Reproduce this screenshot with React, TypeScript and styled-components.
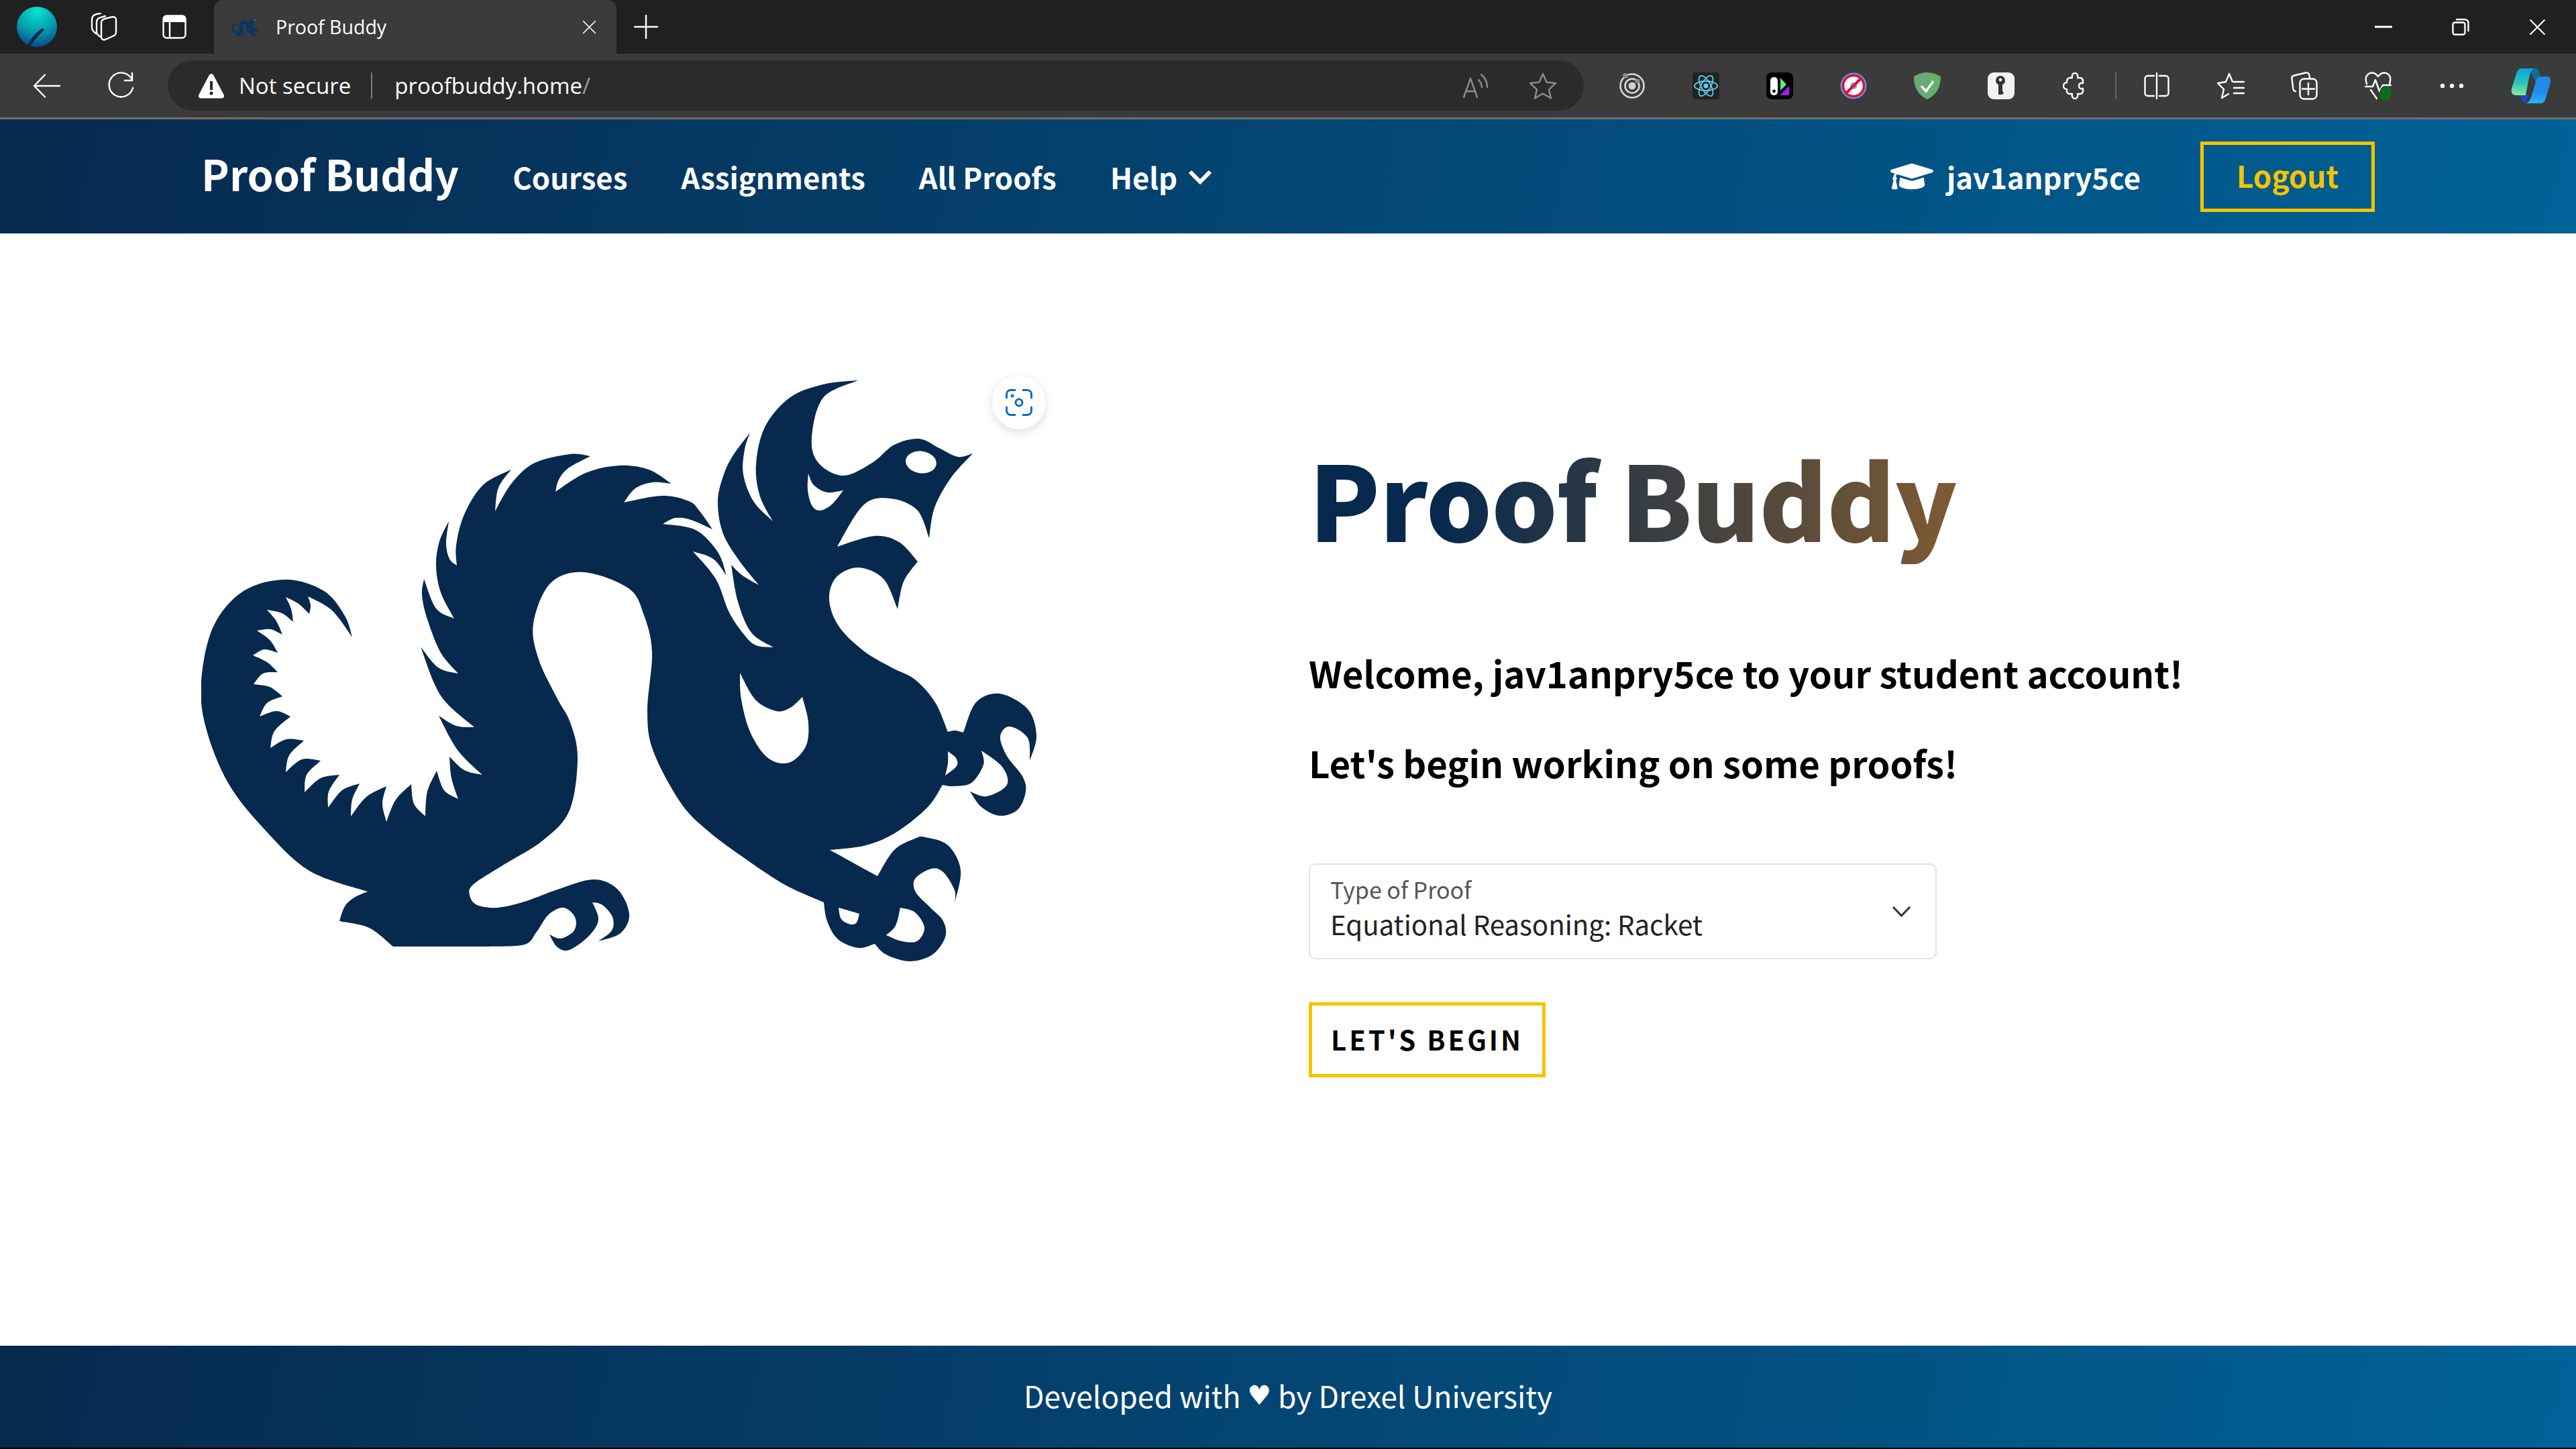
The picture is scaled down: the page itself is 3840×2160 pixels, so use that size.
import React from "react";
import styled, { createGlobalStyle } from "styled-components";
import { FaGraduationCap } from "react-icons/fa";

type Pt = [number, number];

// dragon outline in screen pixels; each run is smooth, runs meet at sharp corners
const OUTLINE: Pt[][] = [
  [[1279, 567], [1227, 593], [1210, 653], [1220, 690], [1257, 709], [1300, 690], [1333, 663], [1370, 654], [1400, 668], [1428, 681], [1450, 676]],
  [[1450, 676], [1417, 713], [1393, 757], [1385, 802]],
  [[1385, 802], [1367, 760], [1327, 743], [1287, 753], [1248, 815]],
  [[1248, 815], [1303, 799], [1340, 808], [1368, 837]],
  [[1368, 837], [1347, 867], [1338, 908]],
  [[1338, 908], [1317, 863], [1280, 846], [1247, 860], [1236, 893], [1250, 933], [1287, 970], [1329, 995], [1364, 1013], [1394, 1047], [1413, 1091]],
  [[1413, 1091], [1424, 1089], [1436, 1092]],
  [[1436, 1092], [1455, 1047], [1490, 1034], [1532, 1057], [1545, 1097], [1535, 1134]],
  [[1535, 1134], [1532, 1100], [1505, 1083], [1491, 1098], [1501, 1127], [1524, 1157], [1529, 1180], [1517, 1207], [1490, 1216], [1463, 1203], [1446, 1180]],
  [[1446, 1180], [1471, 1187], [1501, 1170], [1494, 1143], [1463, 1119]],
  [[1463, 1119], [1466, 1140], [1448, 1167], [1421, 1172], [1405, 1170]],
  [[1405, 1170], [1383, 1203], [1337, 1240], [1291, 1260], [1237, 1267]],
  [[1237, 1267], [1308, 1306]],
  [[1308, 1306], [1333, 1267], [1364, 1250], [1379, 1248], [1413, 1260], [1432, 1297], [1423, 1347]],
  [[1423, 1347], [1423, 1327], [1406, 1300], [1388, 1295], [1364, 1310], [1365, 1330], [1387, 1353], [1406, 1373], [1409, 1397], [1390, 1423], [1356, 1433], [1321, 1423], [1304, 1407]],
  [[1304, 1407], [1279, 1413], [1249, 1400], [1233, 1373], [1228, 1345]],
  [[1228, 1345], [1172, 1320], [1115, 1283], [1057, 1240], [1015, 1197], [974, 1120], [965, 1060], [972, 973], [960, 917], [937, 877], [870, 853], [820, 870], [795, 930], [803, 983], [830, 1040], [850, 1077], [861, 1130], [849, 1208], [809, 1253], [751, 1289], [706, 1318], [700, 1334], [711, 1349], [742, 1353], [782, 1344], [831, 1326], [885, 1311], [921, 1326], [938, 1363], [925, 1391], [892, 1403]],
  [[892, 1403], [912, 1387], [913, 1367], [898, 1349], [883, 1345]],
  [[883, 1345], [892, 1371], [878, 1395], [849, 1416], [831, 1412], [819, 1393]],
  [[819, 1393], [836, 1399], [856, 1387], [857, 1367], [840, 1353], [818, 1363], [800, 1389], [782, 1408], [729, 1411]],
  [[729, 1411], [586, 1411]],
  [[586, 1411], [550, 1383], [506, 1373]],
  [[506, 1373], [514, 1351], [528, 1338], [548, 1329]],
  [[548, 1329], [461, 1298], [394, 1236], [340, 1167], [307, 1085], [300, 1016], [318, 934], [363, 881], [427, 864], [483, 881], [514, 918], [525, 950]],
  [[525, 950], [495, 910], [459, 889]],
  [[459, 889], [463, 902], [461, 915]],
  [[461, 915], [445, 900], [426, 890]],
  [[426, 890], [434, 908], [437, 927]],
  [[437, 927], [420, 914], [398, 909]],
  [[398, 909], [412, 926], [421, 946]],
  [[421, 946], [403, 938], [383, 940]],
  [[383, 940], [402, 954], [414, 973]],
  [[414, 973], [394, 968], [377, 977]],
  [[377, 977], [398, 987], [414, 1002]],
  [[414, 1002], [392, 1004], [378, 1020]],
  [[378, 1020], [402, 1024], [421, 1038]],
  [[421, 1038], [398, 1048], [387, 1068]],
  [[387, 1068], [412, 1060], [433, 1068]],
  [[433, 1068], [409, 1090], [403, 1115]],
  [[403, 1115], [427, 1102], [453, 1104]],
  [[453, 1104], [431, 1126], [426, 1151]],
  [[426, 1151], [450, 1132], [478, 1134]],
  [[478, 1134], [457, 1155], [454, 1181]],
  [[454, 1181], [478, 1160], [506, 1155]],
  [[506, 1155], [490, 1180], [489, 1204]],
  [[489, 1204], [510, 1178], [536, 1168]],
  [[536, 1168], [525, 1192], [523, 1217]],
  [[523, 1217], [546, 1188], [576, 1172]],
  [[576, 1172], [570, 1198], [576, 1225]],
  [[576, 1225], [590, 1192], [613, 1169]],
  [[613, 1169], [617, 1198], [634, 1217]],
  [[634, 1217], [637, 1180], [651, 1149]],
  [[651, 1149], [662, 1178], [683, 1191]],
  [[683, 1191], [673, 1160], [670, 1128]],
  [[670, 1128], [692, 1148], [719, 1155]],
  [[719, 1155], [682, 1118], [654, 1067]],
  [[654, 1067], [680, 1082], [707, 1084]],
  [[707, 1084], [657, 1037], [627, 964]],
  [[627, 964], [653, 995], [683, 1004]],
  [[683, 1004], [657, 973], [637, 923], [629, 887], [632, 863]],
  [[632, 863], [650, 907], [677, 922]],
  [[677, 922], [657, 883], [650, 843], [655, 807], [669, 777]],
  [[669, 777], [665, 810], [670, 833], [681, 843]],
  [[681, 843], [680, 813], [692, 767], [720, 723], [762, 700]],
  [[762, 700], [743, 727], [738, 762]],
  [[738, 762], [763, 720], [797, 690], [850, 677], [880, 680]],
  [[880, 680], [847, 698], [833, 715], [828, 733]],
  [[828, 733], [873, 705], [923, 694], [967, 700], [1001, 721]],
  [[1001, 721], [973, 719], [947, 728], [930, 749]],
  [[930, 749], [987, 739], [1027, 747], [1043, 762], [1062, 789]],
  [[1062, 789], [1030, 775], [1007, 772], [988, 781]],
  [[988, 781], [1037, 790], [1070, 823], [1083, 858]],
  [[1083, 858], [1063, 833], [1033, 822]],
  [[1033, 822], [1067, 863], [1087, 913], [1110, 947], [1127, 962], [1153, 965]],
  [[1153, 965], [1120, 943], [1100, 897], [1090, 842]],
  [[1090, 842], [1107, 858], [1131, 872]],
  [[1131, 872], [1100, 833], [1077, 793], [1070, 747], [1078, 710], [1092, 680], [1118, 645]],
  [[1118, 645], [1110, 670], [1108, 707], [1123, 747], [1152, 777]],
  [[1152, 777], [1133, 740], [1127, 693], [1140, 637], [1177, 593], [1227, 573], [1279, 567]],
];

const HOLES: Pt[][][] = [
  [
    [[1205, 706], [1213, 723], [1233, 734], [1257, 731]],
    [[1257, 731], [1240, 752], [1222, 761], [1210, 753], [1204, 730], [1205, 706]],
  ],
  [
    [[1103, 1003], [1126, 1043], [1157, 1060], [1178, 1055], [1196, 1039]],
    [[1196, 1039], [1205, 1077], [1201, 1113], [1176, 1137], [1145, 1130], [1119, 1093], [1105, 1043], [1103, 1003]],
  ],
  [
    [[1413, 1120], [1425, 1130], [1426, 1142], [1409, 1156]],
    [[1409, 1156], [1413, 1138], [1413, 1120]],
  ],
  [
    [[1250, 1353], [1281, 1362]],
    [[1281, 1362], [1277, 1375], [1268, 1378], [1254, 1370], [1250, 1353]],
  ],
  [
    [[1342, 1353], [1364, 1360], [1378, 1383], [1367, 1403], [1344, 1403], [1321, 1394]],
    [[1321, 1394], [1335, 1380], [1342, 1353]],
  ],
];

// catmull-rom through one run of points
const runToCurve = (pts: Pt[]): string => {
  let d = "";
  for (let i = 0; i < pts.length - 1; i++) {
    const p0 = pts[i - 1] ?? pts[i];
    const p1 = pts[i];
    const p2 = pts[i + 1];
    const p3 = pts[i + 2] ?? p2;
    const c1x = p1[0] + (p2[0] - p0[0]) / 6;
    const c1y = p1[1] + (p2[1] - p0[1]) / 6;
    const c2x = p2[0] - (p3[0] - p1[0]) / 6;
    const c2y = p2[1] - (p3[1] - p1[1]) / 6;
    d += `C${c1x.toFixed(1)} ${c1y.toFixed(1)} ${c2x.toFixed(1)} ${c2y.toFixed(1)} ${p2[0]} ${p2[1]}`;
  }
  return d;
};

const shapeToPath = (runs: Pt[][]): string =>
  `M${runs[0][0][0]} ${runs[0][0][1]}${runs.map(runToCurve).join("")}Z`;

const DRAGON_PATH = [OUTLINE, ...HOLES].map(shapeToPath).join("");

const SANS = `"Noto Sans CJK SC", "Noto Sans", sans-serif`;
const CHROME = `"Open Sans", "Noto Sans", sans-serif`;
const NAVY = "#07294d";
const GOLD = "#f5c400";
const BAR_GRADIENT = `linear-gradient(100deg, ${NAVY}, #006298)`;

const GlobalStyle = createGlobalStyle`
  html, body {
    margin: 0;
    padding: 0;
    background: #fff;
  }
  * {
    box-sizing: border-box;
  }
`;

const Page = styled.div`
  width: 3840px;
  height: 2160px;
  display: flex;
  flex-direction: column;
  overflow: hidden;
  font-family: ${SANS};
`;

/* browser frame */
const TabStrip = styled.div`
  height: 80px;
  flex: none;
  display: flex;
  align-items: center;
  background: #202020;
  color: #fff;
  font-family: ${CHROME};
`;

const Avatar = styled.div`
  width: 60px;
  height: 60px;
  margin-left: 25px;
  border-radius: 50%;
  overflow: hidden;
  display: flex;
`;

const StripIcon = styled.div<{ $left: number; $width: number }>`
  width: ${(p) => p.$width}px;
  margin-left: ${(p) => p.$left}px;
  display: flex;
  align-items: center;
  justify-content: center;
`;

const Tab = styled.div`
  width: 600px;
  height: 80px;
  margin-left: 41px;
  padding: 0 30px 0 26px;
  display: flex;
  align-items: center;
  background: #3b3b3b;
  border-radius: 14px 14px 0 0;
`;

const TabTitle = styled.span`
  flex: 1;
  margin-left: 25px;
  font-size: 28.5px;
  color: #fff;
`;

const WindowControls = styled.div`
  margin-left: auto;
  display: flex;
  align-items: center;
`;

const WindowButton = styled.div`
  width: 115px;
  display: flex;
  justify-content: center;
`;

const Toolbar = styled.div`
  height: 98px;
  flex: none;
  display: flex;
  align-items: flex-start;
  padding: 10px 0 0 15px;
  background: #3b3b3b;
  border-bottom: 3px solid #6e6e6e;
  color: #fff;
  font-family: ${CHROME};
`;

const ToolButton = styled.div`
  width: 110px;
  height: 75px;
  flex: none;
  display: flex;
  align-items: center;
  justify-content: center;
`;

const AddressBar = styled.div`
  width: 2111px;
  height: 75px;
  flex: none;
  margin: 0 17px 0 15px;
  padding: 0 40px 0 45px;
  display: flex;
  align-items: center;
  background: #2b2b2b;
  border-radius: 38px;
`;

const NotSecure = styled.span`
  margin-left: 21px;
  font-size: 33px;
`;

const AddressDivider = styled.span`
  width: 2px;
  height: 39px;
  margin: 0 33px 0 30px;
  background: #7d7d7d;
`;

const Url = styled.span`
  flex: 1;
  font-size: 33px;
  color: #fff;

  span {
    color: #9a9a9a;
  }
`;

const AddressActions = styled.div`
  display: flex;
  align-items: center;
  gap: 60px;
`;

const ToolDivider = styled.span`
  width: 2px;
  height: 40px;
  margin: 18px 5px 0 5px;
  flex: none;
  background: #666;
`;

const CopilotSlot = styled.div`
  width: 60px;
  height: 75px;
  margin-left: 33px;
  display: flex;
  align-items: center;
`;

const HealthWrap = styled.div`
  position: relative;
  width: 40px;
  height: 44px;
`;

const HealthBadge = styled.span`
  position: absolute;
  right: 0;
  bottom: 0;
  width: 18px;
  height: 22px;
  border-radius: 50%;
  background: #0f6b1a;
`;

/* site */
const NavBar = styled.nav`
  height: 170px;
  flex: none;
  display: flex;
  align-items: center;
  padding: 0 300px;
  background: ${BAR_GRADIENT};
`;

const Brand = styled.span`
  margin: 0 80px 10px 0;
  font-size: 62.8px;
  line-height: 80px;
  font-weight: 700;
  color: #fff;
`;

const NavLink = styled.span`
  display: flex;
  align-items: center;
  gap: 16px;
  margin-right: 80px;
  font-size: 43.7px;
  line-height: 60px;
  font-weight: 600;
  color: #fff;
`;

const UserBlock = styled.div`
  margin-left: auto;
  display: flex;
  align-items: center;
  gap: 20px;
  font-size: 43.6px;
  line-height: 60px;
  font-weight: 600;
  color: #fff;
`;

const LogoutButton = styled.div`
  width: 260px;
  height: 105px;
  margin-left: 69px;
  padding-bottom: 4px;
  display: flex;
  align-items: center;
  justify-content: center;
  border: 5px solid ${GOLD};
  color: ${GOLD};
  font-size: 44px;
  font-weight: 600;
`;

const Main = styled.main`
  flex: 1;
  display: flex;
  background: #fff;
`;

const LogoColumn = styled.div`
  width: 1951px;
  flex: none;
  padding: 212px 0 0 300px;
`;

const LogoFrame = styled.div`
  position: relative;
  width: 1250px;
  height: 880px;
`;

const LensButton = styled.div`
  position: absolute;
  left: 1179px;
  top: 0;
  width: 80px;
  height: 80px;
  display: flex;
  align-items: center;
  justify-content: center;
  border-radius: 50%;
  background: #fff;
  box-shadow: 0 4px 14px rgba(0, 0, 0, 0.14);
`;

const TextColumn = styled.div`
  flex: 1;
  padding-top: 293px;
  display: flex;
  flex-direction: column;
  align-items: flex-start;
`;

const Title = styled.h1`
  margin: 0 0 127px;
  font-size: 155px;
  line-height: 200px;
  font-weight: 900;
  letter-spacing: -1px;
  background: linear-gradient(to right, ${NAVY} 20%, #7e5b33 100%);
  -webkit-background-clip: text;
  background-clip: text;
  color: transparent;
`;

const Lead = styled.p<{ $gap: number }>`
  margin: 0 0 ${(p) => p.$gap}px;
  font-size: 54.4px;
  line-height: 70px;
  font-weight: 600;
  color: #000;
`;

const SelectBox = styled.div`
  width: 936px;
  height: 143px;
  margin-bottom: 64px;
  padding: 0 34px 0 30px;
  display: flex;
  align-items: center;
  justify-content: space-between;
  border: 2px solid #dfe2e8;
  border-radius: 10px;
  background: #fff;
`;

const SelectText = styled.div`
  margin-bottom: 12px;
  display: flex;
  flex-direction: column;
  gap: 3px;
`;

const SelectLabel = styled.span`
  font-size: 34px;
  line-height: 46px;
  color: #555;
`;

const SelectValue = styled.span`
  font-size: 40.2px;
  line-height: 50px;
  color: #222;
`;

const BeginButton = styled.div`
  width: 353px;
  height: 112px;
  padding-bottom: 2px;
  display: flex;
  align-items: center;
  justify-content: center;
  border: 5px solid ${GOLD};
  background: #fff;
  color: #000;
  font-size: 40px;
  font-weight: 700;
  letter-spacing: 4px;
`;

const Footer = styled.footer`
  height: 154px;
  flex: none;
  padding-bottom: 4px;
  display: flex;
  align-items: center;
  justify-content: center;
  background: ${BAR_GRADIENT};
  border-bottom: 2px solid #000;
  color: #fff;
  font-size: 44.4px;
  line-height: 60px;
  white-space: pre;
`;

const HeartGlyph = styled.span`
  font-family: "DejaVu Sans", sans-serif;
  font-size: 40px;
`;

const line = { fill: "none", stroke: "#fff", strokeWidth: 2.4, strokeLinecap: "round", strokeLinejoin: "round" } as const;
const dim = { ...line, stroke: "#8d8d8d" };

const Dragon = ({ width, height, fill }: { width: number; height: number; fill: string }) => (
  <svg width={width} height={height} viewBox="300 560 1250 880">
    <path d={DRAGON_PATH} fill={fill} fillRule="evenodd" />
    <ellipse cx={1373} cy={689} rx={23} ry={16.5} transform="rotate(8 1373 689)" fill="#fff" />
  </svg>
);

const ProfileImage = () => (
  <svg width={60} height={60} viewBox="0 0 60 60">
    <defs>
      <radialGradient id="sea" cx="50%" cy="10%" r="95%">
        <stop offset="0%" stopColor="#04e6d4" />
        <stop offset="55%" stopColor="#079cab" />
        <stop offset="100%" stopColor="#0b3f86" />
      </radialGradient>
    </defs>
    <rect width={60} height={60} fill="url(#sea)" />
    <path d="M15 58 C20 50 24 44 28 40 L35 34 L39 32 L41 35 L37 38 C32 44 26 50 20 59Z" fill="#0a2a45" />
  </svg>
);

const CollectionsIcon = () => (
  <svg width={40} height={42} viewBox="0 0 40 42">
    <path d="M8 31 C4 28 2 26 2 22 V10 C2 6 5 3 9 2 L15 1" {...line} />
    <path d="M15 36 C11 34 9 32 9 28 V14 C9 10 11 8 15 7 L22 5" {...line} />
    <path d="M16 15 C16 12 18 10 21 9 L33 6 C36 6 38 8 38 10 V29 C38 32 36 34 33 35 L22 40 C18 41 16 39 16 36Z" {...line} />
  </svg>
);

const VerticalTabsIcon = () => (
  <svg width={36} height={36} viewBox="0 0 36 36">
    <rect x={1.5} y={1.5} width={33} height={33} rx={5} {...line} />
    <path d="M1.5 11 V6.5 C1.5 3.5 3.5 1.5 6.5 1.5 H29.5 C32.5 1.5 34.5 3.5 34.5 6.5 V11Z" fill="#fff" />
    <path d="M11 11 V34" {...line} />
  </svg>
);

const CrossIcon = ({ size }: { size: number }) => (
  <svg width={size} height={size} viewBox="0 0 24 24">
    <path d="M2 2 L22 22 M22 2 L2 22" {...line} strokeWidth={2} />
  </svg>
);

const PlusIcon = () => (
  <svg width={36} height={36} viewBox="0 0 36 36">
    <path d="M18 1 V35 M1 18 H35" {...line} />
  </svg>
);

const MinimizeIcon = () => (
  <svg width={26} height={26} viewBox="0 0 26 26">
    <path d="M1 13 H25" {...line} strokeWidth={3} />
  </svg>
);

const RestoreIcon = () => (
  <svg width={26} height={26} viewBox="0 0 26 26">
    <rect x={1.5} y={6.5} width={18} height={18} rx={3} {...line} />
    <path d="M7 2 H19 C22 2 24.5 4 24.5 7 V19" {...line} />
  </svg>
);

const BackIcon = () => (
  <svg width={42} height={36} viewBox="0 0 42 36">
    <path d="M40 18 H2 M18 1.5 L2 18 L18 34.5" {...line} />
  </svg>
);

const RefreshIcon = () => (
  <svg width={42} height={42} viewBox="0 0 42 42">
    <path d="M38 12 A18 18 0 1 0 39 24" {...line} />
    <path d="M38 2 V13 H27" {...line} />
  </svg>
);

const WarningIcon = () => (
  <svg width={40} height={38} viewBox="0 0 40 38">
    <path d="M20 1 C21.5 1 22.5 2 23.5 3.5 L38.5 32 C40 35 38.5 37.5 35 37.5 H5 C1.5 37.5 0 35 1.5 32 L16.5 3.5 C17.5 2 18.5 1 20 1Z" fill="#fff" />
    <rect x={18} y={12} width={4} height={13} fill="#2b2b2b" />
    <circle cx={20} cy={30} r={2.6} fill="#2b2b2b" />
  </svg>
);

const ReadAloudIcon = () => (
  <svg width={38} height={38} viewBox="0 0 38 38">
    <path d="M1 36 L11 8 L21 36 M4.5 27 H17.5" {...dim} />
    <path d="M23 10 C26 13 27.5 16 28 21 M27 2 C33 7 36 13 36 21" {...dim} />
  </svg>
);

const StarIcon = () => (
  <svg width={42} height={40} viewBox="0 0 42 40">
    <path d="M21 2 L26.5 14.5 L40 16 L30 25.5 L33 38.5 L21 31.5 L9 38.5 L12 25.5 L2 16 L15.5 14.5Z" {...dim} />
  </svg>
);

const OrbitIcon = () => (
  <svg width={40} height={40} viewBox="0 0 40 40">
    <circle cx={20} cy={20} r={17.5} fill="none" stroke="#d8d8d8" strokeWidth={2.6} />
    <circle cx={20} cy={20} r={10.5} fill="none" stroke="#d8d8d8" strokeWidth={2.6} />
    <circle cx={20} cy={20} r={5.5} fill="#d0d0d0" />
    <circle cx={10} cy={5} r={4} fill="#8a8a8a" />
    <circle cx={28} cy={13} r={3.5} fill="#8a8a8a" />
  </svg>
);

const ReactDevIcon = () => (
  <svg width={40} height={40} viewBox="0 0 40 40">
    <rect width={40} height={40} rx={3} fill="#222" />
    <g fill="none" stroke="#5ccfee" strokeWidth={1.8}>
      <ellipse cx={20} cy={20} rx={17} ry={7} />
      <ellipse cx={20} cy={20} rx={17} ry={7} transform="rotate(60 20 20)" />
      <ellipse cx={20} cy={20} rx={17} ry={7} transform="rotate(120 20 20)" />
    </g>
    <circle cx={20} cy={20} r={3.6} fill="#5ccfee" />
  </svg>
);

const PaletteIcon = () => (
  <svg width={40} height={40} viewBox="0 0 40 40">
    <rect width={40} height={40} rx={8} fill="#000" />
    <rect x={6} y={7} width={11} height={27} rx={5} fill="#fff" />
    <circle cx={11.5} cy={28} r={2.4} fill="#000" />
    <path d="M21 8 L30 18 L21 27Z" fill="#5ee68f" />
    <path d="M20 34 L34 20 V34Z" fill="#9a1cf0" />
  </svg>
);

const BlockerIcon = () => (
  <svg width={40} height={40} viewBox="0 0 40 40">
    <circle cx={20} cy={20} r={19.5} fill="#5a9bea" />
    <circle cx={20} cy={20} r={15.5} fill="#fff" stroke="#e0103a" strokeWidth={3.6} />
    <circle cx={20} cy={20} r={5} fill="#6fa4e8" />
    <path d="M10 30 L30 10" stroke="#e0103a" strokeWidth={4} />
  </svg>
);

const ShieldIcon = () => (
  <svg width={40} height={40} viewBox="0 0 40 40">
    <path d="M20 0 C27 0 33 2 40 6 C40 22 34 33 20 40 C6 33 0 22 0 6 C7 2 13 0 20 0Z" fill="#63b06b" />
    <path d="M20 0 C13 0 7 2 0 6 C0 22 6 33 20 40Z" fill="#6aa97a" />
    <path d="M11 20 L18 28 L29 13" fill="none" stroke="#fff" strokeWidth={3.4} />
  </svg>
);

const KeyIcon = () => (
  <svg width={40} height={40} viewBox="0 0 40 40">
    <rect width={40} height={40} rx={9} fill="#f2f2f2" />
    <circle cx={19} cy={12} r={7} fill="#333" />
    <path d="M16 16 H22 V28 L24 30 L22 33 H16Z" fill="#333" />
    <circle cx={19} cy={11} r={2.4} fill="#f2f2f2" />
  </svg>
);

const PuzzleIcon = () => (
  <svg width={36} height={40} viewBox="0 0 36 40">
    <path d="M11 8 H14 C13 4 15 1 18 1 C21 1 23 4 22 8 H25 C28 8 30 10 30 13 V16 C26 15 24 17 24 20 C24 23 26 25 30 24 V28 C30 31 28 32 25 32 H22 C23 36 21 39 18 39 C15 39 13 36 14 32 H11 C8 32 6 30 6 28 V25 C3 25 1 23 1 20 C1 17 3 15 6 15 V13 C6 10 8 8 11 8Z" {...line} />
  </svg>
);

const SplitIcon = () => (
  <svg width={38} height={40} viewBox="0 0 38 40">
    <path d="M15 5 H6 C3 5 1.5 7 1.5 9 V31 C1.5 33 3 35 6 35 H15" {...line} />
    <path d="M23 5 H32 C35 5 36.5 7 36.5 9 V31 C36.5 33 35 35 32 35 H23" {...line} />
    <path d="M19 1 V39" {...line} />
  </svg>
);

const FavoritesIcon = () => (
  <svg width={42} height={40} viewBox="0 0 42 40">
    <path d="M19 2 L24 14 M19 2 L14 14 L2 16 L11 25 L8 38 L18 32" {...line} />
    <path d="M26 14 H41 M26 23 H41 M26 31 H41" {...line} />
  </svg>
);

const AddCollectionIcon = () => (
  <svg width={40} height={42} viewBox="0 0 40 42">
    <path d="M7 29 C5 29 4 28 3.5 26 L1.5 11 C1 8 2.5 6 5 5.5 L22 1.5 C25 1 27 2.5 27.5 5 L28 9" {...line} />
    <rect x={13.5} y={10.5} width={25} height={30} rx={6} {...line} />
    <path d="M26 17 V34 M17 25.5 H35" {...line} />
  </svg>
);

const HealthIcon = () => (
  <HealthWrap>
    <svg width={40} height={44} viewBox="0 0 40 44">
      <path d="M3 19 C1 13 1 7 6 4 C11 1 16 3 20 8 C24 3 29 1 34 4 C39 7 39 13 37 19" {...line} />
      <path d="M1 23 H12 L16 13 L22 30 L27 21 H39" {...line} />
      <path d="M9 28 L18 41" {...line} />
    </svg>
    <HealthBadge />
  </HealthWrap>
);

const MoreIcon = () => (
  <svg width={36} height={8} viewBox="0 0 36 8">
    <circle cx={4} cy={4} r={3.2} fill="#fff" />
    <circle cx={18} cy={4} r={3.2} fill="#fff" />
    <circle cx={32} cy={4} r={3.2} fill="#fff" />
  </svg>
);

const CopilotIcon = () => (
  <svg width={60} height={52} viewBox="0 0 60 52">
    <defs>
      <linearGradient id="cpLeft" x1="0.5" y1="0" x2="0.4" y2="1">
        <stop offset="0%" stopColor="#0aa3e6" />
        <stop offset="55%" stopColor="#2ec4b6" />
        <stop offset="100%" stopColor="#8ae8a0" />
      </linearGradient>
      <linearGradient id="cpRight" x1="0.5" y1="0" x2="0.4" y2="1">
        <stop offset="0%" stopColor="#2a86e0" />
        <stop offset="60%" stopColor="#1f8ef0" />
        <stop offset="100%" stopColor="#2bb6f2" />
      </linearGradient>
    </defs>
    <path d="M32 0 H38 C42 2 43 8 44 13 L36 20 L30 4Z" fill="#0b6f9e" />
    <path d="M14 39 L26 40 L22 52 C18 51 15 46 14 39Z" fill="#2145c9" />
    <path d="M16 0 H36 C31 1 29 6 27 14 L22 40 H8 C2 40 0 36 1 30 L8 8 C9 3 12 0 16 0Z" fill="url(#cpLeft)" />
    <path d="M44 12 H54 C58 12 60 16 59 21 L52 44 C51 49 48 52 44 52 H22 C27 51 29 46 31 40 L38 17 C39 14 41 12 44 12Z" fill="url(#cpRight)" />
  </svg>
);

const NavChevron = () => (
  <svg width={36} height={24} viewBox="0 0 36 24">
    <path d="M3 5 L18 20 L33 5" fill="none" stroke="#fff" strokeWidth={6} />
  </svg>
);

const LensIcon = () => (
  <svg width={40} height={40} viewBox="0 0 40 40" fill="none" stroke="#0f6cbd" strokeWidth={3} strokeLinecap="round">
    <path d="M14 1.5 H8 C4 1.5 1.5 4 1.5 8 V13 M26 1.5 H32 C36 1.5 38.5 4 38.5 8 V13" />
    <path d="M1.5 27 V32 C1.5 36 4 38.5 8 38.5 H14 M38.5 27 V32 C38.5 36 36 38.5 32 38.5 H26" />
    <circle cx={20} cy={20} r={5} />
    <circle cx={10} cy={10} r={1} />
  </svg>
);

const SelectChevron = () => (
  <svg width={33} height={22} viewBox="0 0 33 22">
    <path d="M4 4 L16.5 17 L29 4" fill="none" stroke="#333" strokeWidth={3} />
  </svg>
);

export default function App() {
  return (
    <Page>
      <GlobalStyle />
      <TabStrip>
        <Avatar>
          <ProfileImage />
        </Avatar>
        <StripIcon $left={50} $width={40}>
          <CollectionsIcon />
        </StripIcon>
        <StripIcon $left={67} $width={36}>
          <VerticalTabsIcon />
        </StripIcon>
        <Tab>
          <Dragon width={41} height={29} fill="#0b3560" />
          <TabTitle>Proof Buddy</TabTitle>
          <CrossIcon size={21} />
        </Tab>
        <StripIcon $left={26} $width={36}>
          <PlusIcon />
        </StripIcon>
        <WindowControls>
          <WindowButton>
            <MinimizeIcon />
          </WindowButton>
          <WindowButton>
            <RestoreIcon />
          </WindowButton>
          <WindowButton>
            <CrossIcon size={25} />
          </WindowButton>
        </WindowControls>
      </TabStrip>
      <Toolbar>
        <ToolButton>
          <BackIcon />
        </ToolButton>
        <ToolButton>
          <RefreshIcon />
        </ToolButton>
        <AddressBar>
          <WarningIcon />
          <NotSecure>Not secure</NotSecure>
          <AddressDivider />
          <Url>
            proofbuddy.home<span>/</span>
          </Url>
          <AddressActions>
            <ReadAloudIcon />
            <StarIcon />
          </AddressActions>
        </AddressBar>
        <ToolButton>
          <OrbitIcon />
        </ToolButton>
        <ToolButton>
          <ReactDevIcon />
        </ToolButton>
        <ToolButton>
          <PaletteIcon />
        </ToolButton>
        <ToolButton>
          <BlockerIcon />
        </ToolButton>
        <ToolButton>
          <ShieldIcon />
        </ToolButton>
        <ToolButton>
          <KeyIcon />
        </ToolButton>
        <ToolButton>
          <PuzzleIcon />
        </ToolButton>
        <ToolDivider />
        <ToolButton>
          <SplitIcon />
        </ToolButton>
        <ToolButton>
          <FavoritesIcon />
        </ToolButton>
        <ToolButton>
          <AddCollectionIcon />
        </ToolButton>
        <ToolButton>
          <HealthIcon />
        </ToolButton>
        <ToolButton>
          <MoreIcon />
        </ToolButton>
        <CopilotSlot>
          <CopilotIcon />
        </CopilotSlot>
      </Toolbar>
      <NavBar>
        <Brand>Proof Buddy</Brand>
        <NavLink>Courses</NavLink>
        <NavLink>Assignments</NavLink>
        <NavLink>All Proofs</NavLink>
        <NavLink>
          Help
          <NavChevron />
        </NavLink>
        <UserBlock>
          <FaGraduationCap size={64} />
          jav1anpry5ce
          <LogoutButton>Logout</LogoutButton>
        </UserBlock>
      </NavBar>
      <Main>
        <LogoColumn>
          <LogoFrame>
            <Dragon width={1250} height={880} fill={NAVY} />
            <LensButton>
              <LensIcon />
            </LensButton>
          </LogoFrame>
        </LogoColumn>
        <TextColumn>
          <Title>Proof Buddy</Title>
          <Lead $gap={64}>Welcome, jav1anpry5ce to your student account!</Lead>
          <Lead $gap={115}>Let's begin working on some proofs!</Lead>
          <SelectBox>
            <SelectText>
              <SelectLabel>Type of Proof</SelectLabel>
              <SelectValue>Equational Reasoning: Racket</SelectValue>
            </SelectText>
            <SelectChevron />
          </SelectBox>
          <BeginButton>LET'S BEGIN</BeginButton>
        </TextColumn>
      </Main>
      <Footer>
        Developed with <HeartGlyph>♥</HeartGlyph> by Drexel University
      </Footer>
    </Page>
  );
}
